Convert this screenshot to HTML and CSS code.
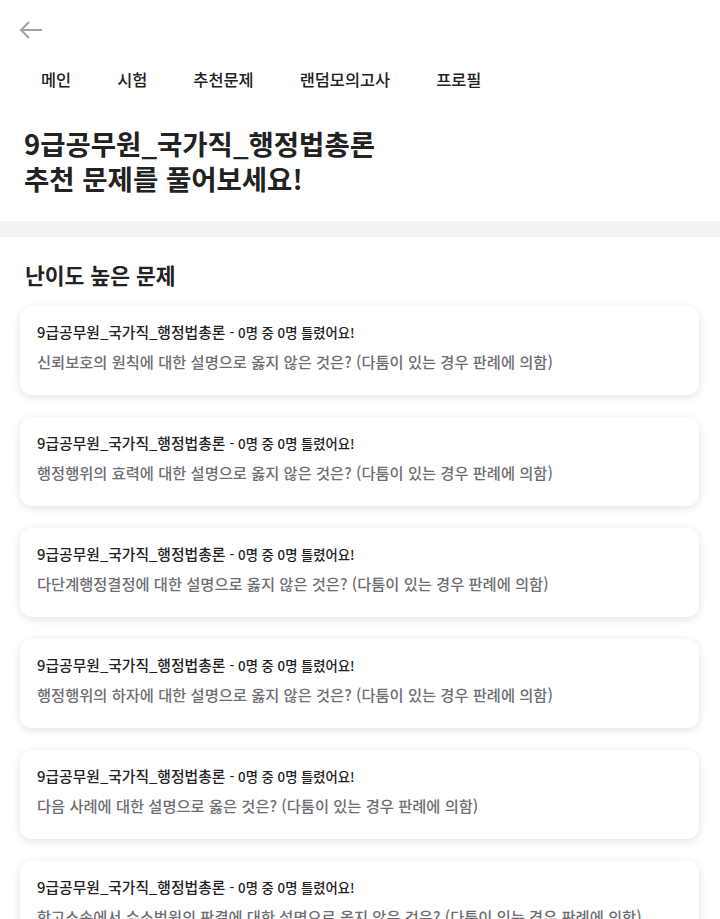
FILE: index.html
```html
<!DOCTYPE html>
<html lang="ko">
<head>
<meta charset="utf-8">
<link rel="stylesheet" href="styles.css">
</head>
<body>
<header class="top">
  <div class="back">
    <svg width="24" height="18" viewBox="0 0 24 18" fill="none" stroke="#a3a3a3" stroke-width="2" stroke-linecap="butt">
      <path d="M23 9H2"/>
      <path d="M10 1L2 9l8 8"/>
    </svg>
  </div>
  <nav class="nav">
    <span class="nav-item">메인</span>
    <span class="nav-item">시험</span>
    <span class="nav-item">추천문제</span>
    <span class="nav-item">랜덤모의고사</span>
    <span class="nav-item">프로필</span>
  </nav>
  <h1 class="title">9급공무원_국가직_행정법총론<br>추천 문제를 풀어보세요!</h1>
</header>
<div class="band"></div>
<main class="section">
  <h2 class="section-title">난이도 높은 문제</h2>
  <div class="list">
    <div class="card"><p class="meta">9급공무원_국가직_행정법총론 <span class="small">- 0명 중 0명 틀렸어요!</span></p><p class="q">신뢰보호의 원칙에 대한 설명으로 옳지 않은 것은? (다툼이 있는 경우 판례에 의함)</p></div>
    <div class="card"><p class="meta">9급공무원_국가직_행정법총론 <span class="small">- 0명 중 0명 틀렸어요!</span></p><p class="q">행정행위의 효력에 대한 설명으로 옳지 않은 것은? (다툼이 있는 경우 판례에 의함)</p></div>
    <div class="card"><p class="meta">9급공무원_국가직_행정법총론 <span class="small">- 0명 중 0명 틀렸어요!</span></p><p class="q">다단계행정결정에 대한 설명으로 옳지 않은 것은? (다툼이 있는 경우 판례에 의함)</p></div>
    <div class="card"><p class="meta">9급공무원_국가직_행정법총론 <span class="small">- 0명 중 0명 틀렸어요!</span></p><p class="q">행정행위의 하자에 대한 설명으로 옳지 않은 것은? (다툼이 있는 경우 판례에 의함)</p></div>
    <div class="card"><p class="meta">9급공무원_국가직_행정법총론 <span class="small">- 0명 중 0명 틀렸어요!</span></p><p class="q">다음 사례에 대한 설명으로 옳은 것은? (다툼이 있는 경우 판례에 의함)</p></div>
    <div class="card"><p class="meta">9급공무원_국가직_행정법총론 <span class="small">- 0명 중 0명 틀렸어요!</span></p><p class="q">항고소송에서 수소법원의 판결에 대한 설명으로 옳지 않은 것은? (다툼이 있는 경우 판례에 의함)</p></div>
  </div>
</main>
</body>
</html>
```
FILE: styles.css
```css
* { box-sizing: border-box; }
html, body { margin: 0; padding: 0; background: #fff; }
body {
  font-family: "Noto Sans CJK KR", "Noto Sans", sans-serif;
  color: #222;
  overflow: hidden;
}
.back {
  height: 60px;
  padding: 21px 0 0 19px;
}
.back svg { display: block; }
.nav {
  display: flex;
  gap: 46px;
  padding: 6px 0 0 41px;
  height: 60px;
}
.nav-item {
  font-size: 16.4px;
  line-height: 26px;
  font-weight: 500;
  color: #222;
}
.title {
  margin: 0;
  padding: 6px 0 25px 24px;
  font-size: 27.5px;
  line-height: 35px;
  font-weight: 700;
  color: #222;
}
.band { height: 16px; background: #f2f3f5; }
.section { padding: 23px 21px 0 20px; }
.section-title {
  margin: 0 0 16px 5px;
  font-size: 21.5px;
  line-height: 30px;
  font-weight: 700;
  color: #222;
}
.list { display: flex; flex-direction: column; gap: 22px; }
.card {
  background: #fff;
  border-radius: 12px;
  box-shadow: 0 2px 8px rgba(0,0,0,0.12);
  padding: 16px 17px 25px;
  height: 89px;
}
.meta {
  margin: 0;
  font-size: 14.8px;
  line-height: 20px;
  font-weight: 500;
  color: #222;
  white-space: nowrap;
}
.small { font-size: 13.3px; }
.q {
  margin: 8px 0 0;
  font-size: 15.3px;
  line-height: 20px;
  font-weight: 500;
  color: #6e6e72;
  white-space: nowrap;
}
```
